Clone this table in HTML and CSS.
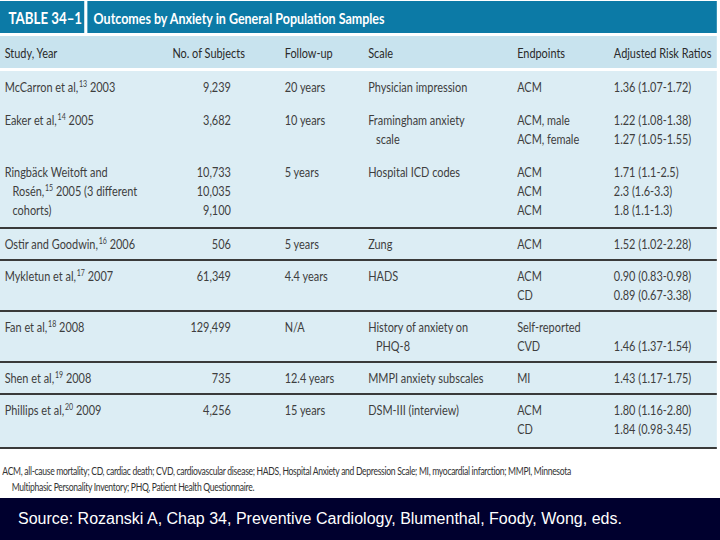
FILE: index.html
```html
<!DOCTYPE html>
<html>
<head>
<meta charset="utf-8">
<link rel="stylesheet" href="styles.css">
</head>
<body>
<div class="page">
  <div class="table">
    <div class="title-bar">
      <div class="tag">TABLE 34–1</div>
      <div class="title">Outcomes by Anxiety in General Population Samples</div>
    </div>
    <div class="col-head row">
      <div>Study, Year</div>
      <div class="hsub">No. of Subjects</div>
      <div class="fu">Follow-up</div>
      <div>Scale</div>
      <div>Endpoints</div>
      <div>Adjusted Risk Ratios</div>
    </div>
    <div class="body">
      <div class="group row first">
        <div class="st">McCarron et al,<sup>13</sup> 2003</div>
        <div class="num">9,239</div>
        <div class="fu">20 years</div>
        <div class="st">Physician impression</div>
        <div>ACM</div>
        <div>1.36 (1.07-1.72)</div>

        <div class="st">Eaker et al,<sup>14</sup> 2005</div>
        <div class="num">3,682</div>
        <div class="fu">10 years</div>
        <div class="st">Framingham anxiety<br>scale</div>
        <div>ACM, male<br>ACM, female</div>
        <div>1.22 (1.08-1.38)<br>1.27 (1.05-1.55)</div>

        <div class="st">Ringbäck Weitoft and<br>Rosén,<sup>15</sup> 2005 (3 different<br>cohorts)</div>
        <div class="num">10,733<br>10,035<br>9,100</div>
        <div class="fu">5 years</div>
        <div class="st">Hospital ICD codes</div>
        <div>ACM<br>ACM<br>ACM</div>
        <div>1.71 (1.1-2.5)<br>2.3 (1.6-3.3)<br>1.8 (1.1-1.3)</div>
      </div>
      <div class="group row">
        <div class="st">Ostir and Goodwin,<sup>16</sup> 2006</div>
        <div class="num">506</div>
        <div class="fu">5 years</div>
        <div class="st">Zung</div>
        <div>ACM</div>
        <div>1.52 (1.02-2.28)</div>
      </div>
      <div class="group row">
        <div class="st">Mykletun et al,<sup>17</sup> 2007</div>
        <div class="num">61,349</div>
        <div class="fu">4.4 years</div>
        <div class="st">HADS</div>
        <div>ACM<br>CD</div>
        <div>0.90 (0.83-0.98)<br>0.89 (0.67-3.38)</div>
      </div>
      <div class="group row">
        <div class="st">Fan et al,<sup>18</sup> 2008</div>
        <div class="num">129,499</div>
        <div class="fu">N/A</div>
        <div class="st">History of anxiety on<br>PHQ-8</div>
        <div>Self-reported<br>CVD</div>
        <div><br>1.46 (1.37-1.54)</div>
      </div>
      <div class="group row">
        <div class="st">Shen et al,<sup>19</sup> 2008</div>
        <div class="num">735</div>
        <div class="fu">12.4 years</div>
        <div class="st">MMPI anxiety subscales</div>
        <div>MI</div>
        <div>1.43 (1.17-1.75)</div>
      </div>
      <div class="group row">
        <div class="st">Phillips et al,<sup>20</sup> 2009</div>
        <div class="num">4,256</div>
        <div class="fu">15 years</div>
        <div class="st">DSM-III (interview)</div>
        <div>ACM<br>CD</div>
        <div>1.80 (1.16-2.80)<br>1.84 (0.98-3.45)</div>
      </div>
    </div>
    <p class="note">ACM, all-cause mortality; CD, cardiac death; CVD, cardiovascular disease; HADS, Hospital Anxiety and Depression Scale; MI, myocardial infarction; MMPI, Minnesota<br>Multiphasic Personality Inventory; PHQ, Patient Health Questionnaire.</p>
  </div>
  <div class="source">Source: Rozanski A, Chap 34, Preventive Cardiology, Blumenthal, Foody, Wong, eds.</div>
</div>
</body>
</html>
```

FILE: styles.css
```css
html, body {
  margin: 0;
  padding: 0;
  background: #ffffff;
}
.page {
  width: 720px;
  height: 540px;
  display: flex;
  flex-direction: column;
  overflow: hidden;
}
/* The printed table is set in a narrow face: draw it at natural width and condense it */
.table {
  width: 919px;
  flex: none;
  transform: scaleX(0.78);
  transform-origin: 0 0;
  font-family: "Lato", "Open Sans", sans-serif;
  color: #3e3e3e;
}
.title-bar {
  height: 32px;
  margin-top: 1px;
  background: #0c7aa6;
  display: flex;
  align-items: center;
  color: #ffffff;
  font-weight: 700;
  white-space: nowrap;
}
.tag {
  box-sizing: border-box;
  width: 112px;
  flex: none;
  padding-left: 11px;
  height: 100%;
  display: flex;
  align-items: center;
  font-size: 17px;
  border-right: 4px solid #ffffff;
}
.title {
  padding-left: 8px;
  font-size: 16px;
}
.row {
  display: grid;
  grid-template-columns: 209px 81px 176px 191px 124px auto;
  padding-left: 6px;
  font-size: 14px;
  line-height: 19px;
  white-space: nowrap;
}
.col-head {
  margin-top: 3px;
  height: 32px;
  align-items: center;
  background: #c8e3ee;
  color: #2a2a2a;
}
.hsub {
  padding-left: 6px;
}
.fu {
  padding-left: 69px;
}
.num {
  text-align: right;
}
.st {
  padding-left: 10px;
  text-indent: -10px;
}
.body {
  margin-top: 3px;
  background: #dcedf4;
}
.group {
  padding: 5px 0 6px 6px;
  border-bottom: 2px solid #3a3a3a;
}
.group.first {
  padding-top: 6px;
  padding-bottom: 8px;
  row-gap: 14px;
}
.group:last-child {
  padding-bottom: 9px;
}
sup {
  font-size: 9px;
  line-height: 0;
  vertical-align: 5px;
  margin-left: 1px;
}
.note {
  margin: 14px 0 0 0;
  padding-left: 15px;
  text-indent: -12px;
  font-size: 11px;
  letter-spacing: -0.4px;
  line-height: 16px;
  color: #333333;
}
.source {
  margin-top: auto;
  height: 42px;
  flex: none;
  background: #00002e;
  color: #ffffff;
  font-family: "Liberation Sans", Arial, sans-serif;
  font-size: 16px;
  display: flex;
  align-items: center;
  padding-left: 18px;
}
```
